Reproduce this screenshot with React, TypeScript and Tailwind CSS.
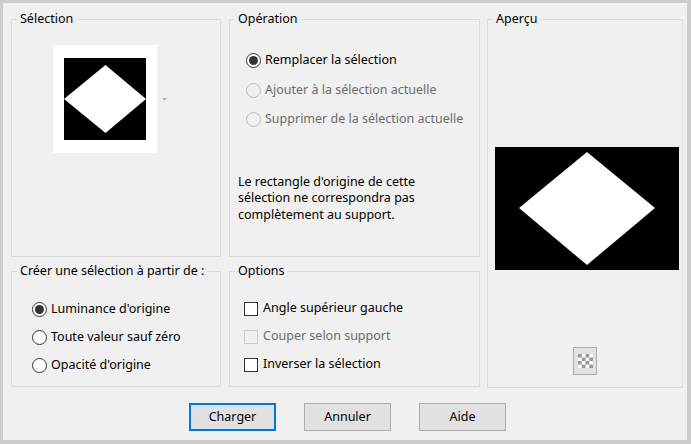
import React from "react";

function Radio({ label, checked, disabled }: { label: string; checked?: boolean; disabled?: boolean }) {
  return (
    <div className="flex h-[28px] items-center">
      <span
        className={
          "flex h-[15px] w-[15px] items-center justify-center rounded-full border " +
          (disabled ? "border-[#bcbcbc] bg-[#f0f0f0]" : "border-[#333333] bg-white")
        }
      >
        {checked && <span className="h-[9px] w-[9px] rounded-full bg-[#333333]" />}
      </span>
      <span className={"ml-[4px] " + (disabled ? "text-[#6d6d6d]" : "text-black")}>{label}</span>
    </div>
  );
}

function Check({ label, disabled }: { label: string; disabled?: boolean }) {
  return (
    <div className="flex h-[28px] items-center">
      <span
        className={
          "h-[14px] w-[14px] border " + (disabled ? "border-[#cccccc] bg-[#f0f0f0]" : "border-[#333333] bg-white")
        }
      />
      <span className={"ml-[5px] " + (disabled ? "text-[#6d6d6d]" : "text-black")}>{label}</span>
    </div>
  );
}

function Box({ title, className, children }: { title: string; className?: string; children?: React.ReactNode }) {
  return (
    <fieldset className={"border border-[#dcdcdc] " + (className ?? "")}>
      <legend className="ml-[5px] px-[3px] leading-[16px]">{title}</legend>
      {children}
    </fieldset>
  );
}

function Diamond({ w, h, pts }: { w: number; h: number; pts: string }) {
  return (
    <svg width={w} height={h} viewBox={`0 0 ${w} ${h}`} className="block">
      <rect width={w} height={h} fill="#000" />
      <polygon points={pts} fill="#fff" />
    </svg>
  );
}

export default function App() {
  return (
    <div className="h-[444px] w-[691px] bg-[#cccccc] pb-[4px] pl-[3px] pr-[4px] pt-[3px] font-['Noto_Sans',sans-serif] text-[12.5px] text-black">
      <div className="flex h-full flex-col bg-[#f0f0f0] pl-[8px] pt-[8px]">
        <div className="flex">
          {/* left column */}
          <div className="flex w-[210px] flex-col gap-[6px]">
            <Box title="Sélection" className="h-[246px]">
              <div className="ml-[41px] mt-[18px] flex items-center">
                <div className="bg-white px-[11px] py-[13px]">
                  <Diamond w={82} h={82} pts="0,41 41.5,7 82,41 41.5,75" />
                </div>
                <svg width="5" height="3" viewBox="0 0 5 3" className="ml-[5px]">
                  <polygon points="0,0 5,0 2.5,3" fill="#b4b4b4" />
                </svg>
              </div>
            </Box>
            <Box title="Créer une sélection à partir de :" className="h-[124px]">
              <div className="mt-[16px] pl-[20px]">
                <Radio label="Luminance d'origine" checked />
                <Radio label="Toute valeur sauf zéro" />
                <Radio label="Opacité d'origine" />
              </div>
            </Box>
          </div>

          {/* middle column */}
          <div className="ml-[8px] flex w-[251px] flex-col gap-[6px]">
            <Box title="Opération" className="h-[246px]">
              <div className="mt-[19px] flex flex-col pl-[16px] [&>div]:h-[29.5px]">
                <Radio label="Remplacer la sélection" checked />
                <Radio label="Ajouter à la sélection actuelle" disabled />
                <Radio label="Supprimer de la sélection actuelle" disabled />
              </div>
              <p className="mt-[39px] w-[205px] pl-[8px] leading-[16.5px]">
                Le rectangle d'origine de cette sélection ne correspondra pas complètement au support.
              </p>
            </Box>
            <Box title="Options" className="h-[124px]">
              <div className="mt-[15.5px] pl-[14px]">
                <Check label="Angle supérieur gauche" />
                <Check label="Couper selon support" disabled />
                <Check label="Inverser la sélection" />
              </div>
            </Box>
          </div>

          {/* right column */}
          <Box title="Aperçu" className="ml-[7px] h-[377px] w-[196px]">
            <div className="ml-[7px] mt-[120px]">
              <Diamond w={184} h={123} pts="24,61 92,5 160,61 92,118" />
            </div>
            <div className="mt-[77px] flex justify-center">
              <div className="flex h-[28px] w-[24px] items-center justify-center border border-[#adadad] bg-[#e1e1e1]">
                <svg width="15" height="14" viewBox="0 0 4 4" preserveAspectRatio="none">
                  <rect width="4" height="4" fill="#fff" />
                  <rect x="0" y="0" width="1" height="1" fill="#999" />
                  <rect x="2" y="0" width="1" height="1" fill="#999" />
                  <rect x="1" y="1" width="1" height="1" fill="#999" />
                  <rect x="3" y="1" width="1" height="1" fill="#999" />
                  <rect x="0" y="2" width="1" height="1" fill="#999" />
                  <rect x="2" y="2" width="1" height="1" fill="#999" />
                  <rect x="1" y="3" width="1" height="1" fill="#999" />
                  <rect x="3" y="3" width="1" height="1" fill="#999" />
                </svg>
              </div>
            </div>
          </Box>
        </div>

        {/* buttons */}
        <div className="ml-[178px] mt-[15px] flex gap-[28px]">
          <button className="h-[28px] w-[87px] border-2 border-[#0078d7] bg-[#e1e1e1]">Charger</button>
          <button className="h-[28px] w-[87px] border border-[#adadad] bg-[#e1e1e1]">Annuler</button>
          <button className="h-[28px] w-[87px] border border-[#adadad] bg-[#e1e1e1]">Aide</button>
        </div>
      </div>
    </div>
  );
}
